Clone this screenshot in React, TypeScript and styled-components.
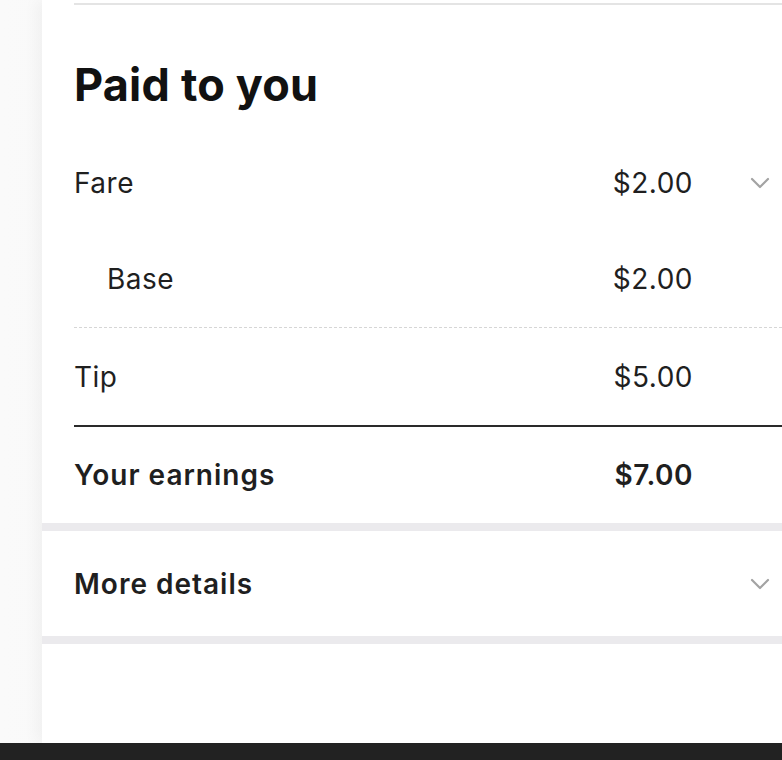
import styled, { createGlobalStyle } from 'styled-components';

const GlobalStyle = createGlobalStyle`
  html, body {
    margin: 0;
    padding: 0;
    background: #f6f6f6;
  }

  body {
    font-family: Inter, "Noto Sans", sans-serif;
    color: #1b1b1b;
    overflow: hidden;
  }
`;

const Screen = styled.div`
  display: flex;
  flex-direction: column;
  width: 782px;
  height: 760px;
`;

const Stage = styled.div`
  display: flex;
  flex: 1;
  background: linear-gradient(90deg, #fafafa 0%, #f4f4f4 70%, #ececec 100%);
`;

const Gutter = styled.div`
  flex: 0 0 42px;
`;

const Panel = styled.div`
  flex: 1;
  display: flex;
  flex-direction: column;
  background: #ffffff;
  box-shadow: -6px 0 14px rgba(0, 0, 0, 0.04);
  overflow: hidden;
`;

const Section = styled.section`
  padding-left: 32px;
  background: #fff;
`;

const TopRule = styled.div`
  height: 2px;
  margin-top: 3px;
  background: #e4e4e4;
  margin-right: -40px;
`;

const Heading = styled.h2`
  margin: 0;
  height: 130px;
  display: flex;
  align-items: center;
  padding-top: 28px;
  box-sizing: border-box;
  font-size: 45px;
  font-weight: 700;
  letter-spacing: 0.2px;
  color: #111;
`;

const Row = styled.div<{ $indent?: boolean; $strong?: boolean; $height?: number }>`
  display: grid;
  grid-template-columns: 1fr auto 89px;
  align-items: center;
  height: ${({ $height }) => $height ?? 96}px;
  padding-left: ${({ $indent }) => ($indent ? 33 : 0)}px;
  font-size: 28px;
  font-weight: ${({ $strong }) => ($strong ? 600 : 400)};
  letter-spacing: ${({ $strong }) => ($strong ? 1 : 0.5)}px;
  color: #1f1f1f;
`;

const Amount = styled.span`
  text-align: right;
  letter-spacing: 0.5px;
`;

const ChevronCell = styled.span`
  display: flex;
  justify-content: flex-end;
  padding-right: 12px;
  color: #a3a3a3;
`;

const Divider = styled.div<{ $kind: 'dashed' | 'solid' }>`
  margin-right: -40px;
  ${({ $kind }) =>
    $kind === 'dashed'
      ? `
        height: 0;
        border-top: 1px dashed #d6d6d6;
        margin-bottom: 1px;
      `
      : `
        height: 2px;
        background: #2a2a2a;
      `}
`;

const Band = styled.div`
  height: 8px;
  background: #ebeaed;
`;

const Spacer = styled.div`
  flex: 1;
  background: #fff;
`;

const BottomBar = styled.div`
  height: 17px;
  background: #222222;
`;

const Chevron = () => (
  <svg width="20" height="12" viewBox="0 0 20 12" fill="none">
    <path
      d="M2 2l8 8 8-8"
      stroke="currentColor"
      strokeWidth="2.2"
      strokeLinecap="round"
      strokeLinejoin="round"
    />
  </svg>
);

const lines = [
  { label: 'Fare', amount: '$2.00', chevron: true },
  { label: 'Base', amount: '$2.00', indent: true },
];

export default function App() {
  return (
    <>
      <GlobalStyle />
      <Screen>
        <Stage>
          <Gutter />
          <Panel>
            <Section>
              <TopRule />
              <Heading>Paid to you</Heading>
              {lines.map((line) => (
                <Row key={line.label} $indent={line.indent}>
                  <span>{line.label}</span>
                  <Amount>{line.amount}</Amount>
                  <ChevronCell>{line.chevron && <Chevron />}</ChevronCell>
                </Row>
              ))}
              <Divider $kind="dashed" />
              <Row>
                <span>Tip</span>
                <Amount>$5.00</Amount>
                <ChevronCell />
              </Row>
              <Divider $kind="solid" />
              <Row $strong>
                <span>Your earnings</span>
                <Amount>$7.00</Amount>
                <ChevronCell />
              </Row>
            </Section>
            <Band />
            <Section>
              <Row $strong $height={105}>
                <span>More details</span>
                <span />
                <ChevronCell>
                  <Chevron />
                </ChevronCell>
              </Row>
            </Section>
            <Band />
            <Spacer />
          </Panel>
        </Stage>
        <BottomBar />
      </Screen>
    </>
  );
}
